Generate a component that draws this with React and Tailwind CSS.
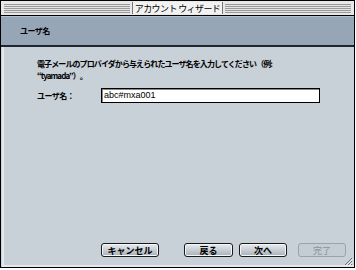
import React from "react";

const font = { fontFamily: '"Noto Sans CJK JP", "Noto Sans", sans-serif' };

const stripes =
  "bg-[repeating-linear-gradient(to_bottom,#9a9a9a_0px,#9a9a9a_1px,#e4e4e4_1px,#e4e4e4_2px)]";

function Btn({ label, w, disabled }) {
  return (
    <div
      className={
        "h-[14px] rounded-[3px] border flex items-center justify-center text-[9px] leading-none " +
        (disabled
          ? "border-[#9aa2aa] bg-[#c4ccd4] text-[#8a929a]"
          : "border-[#1a1a1a] bg-[linear-gradient(to_bottom,#e8ecf0,#a8b0b8)] text-black font-bold shadow-[inset_0_0_0_1px_#f4f6f8]")
      }
      style={{ width: w }}
    >
      {label}
    </div>
  );
}

export default function App() {
  return (
    <div className="w-[356px] h-[270px] bg-white" style={font}>
      <div className="relative w-[355px] h-[268px] border border-black flex flex-col bg-[#c8d0d8]">
        {/* title bar */}
        <div className="h-[15px] flex items-center gap-[2px] bg-[#e8e8e8] px-[3px] border-b border-black">
          <div className={"flex-1 h-[9px] " + stripes}></div>
          <div className="h-[12px] px-[2px] flex items-center bg-[#f2f2f2] border-x border-[#777] text-[9px] tracking-[-0.6px] leading-none text-black">
            アカウント ウィザード
          </div>
          <div className={"flex-1 h-[9px] " + stripes}></div>
        </div>
        {/* header */}
        <div className="h-[29px] bg-[#96a6b6] border-t border-[#b4c2d0] flex items-center pl-[19px] text-[8px] tracking-[-0.5px] font-bold text-black">
          ユーザ名
        </div>
        <div className="h-[2px] bg-[#1e2630]"></div>
        {/* content */}
        <div className="flex-1 flex flex-col border-l-2 border-[#e2e8ee] ml-[1px]">
          <div className="pl-[33px] pt-[11px] text-[8px] tracking-[-0.9px] leading-[12px] text-black font-bold whitespace-nowrap">
            <p>電子メールのプロバイダから与えられたユーザ名を入力してください（例:</p>
            <p>“tyamada”）。</p>
          </div>
          <div className="flex items-center pl-[33px] mt-[6px]">
            <div className="w-[64px] text-[8px] tracking-[-0.5px] font-bold">ユーザ名：</div>
            <div className="w-[219px] h-[15px] bg-white border border-black shadow-[inset_1px_1px_0_#888] flex items-center pl-[2px] text-[9px]" style={{ fontFamily: '"Liberation Sans", sans-serif' }}>
              abc#mxa001
            </div>
          </div>
          <div className="flex-1"></div>
          <div className="flex items-center pl-[97px] pb-[8px]">
            <Btn label="キャンセル" w={58} />
            <div className="w-[25px]"></div>
            <Btn label="戻る" w={49} />
            <div className="w-[6px]"></div>
            <Btn label="次へ" w={48} />
            <div className="w-[11px]"></div>
            <Btn label="完了" w={48} disabled />
          </div>
          <div className="h-[2px] bg-[#e2e8ee]"></div>
        </div>
        <svg className="absolute right-[1px] bottom-[1px]" width="10" height="10" viewBox="0 0 10 10">
          <path d="M9 2 L2 9 M9 5 L5 9 M9 8 L8 9" stroke="#6a7078" strokeWidth="1" />
          <path d="M10 3 L3 10 M10 6 L6 10" stroke="#f0f0f0" strokeWidth="1" />
        </svg>
      </div>
    </div>
  );
}
